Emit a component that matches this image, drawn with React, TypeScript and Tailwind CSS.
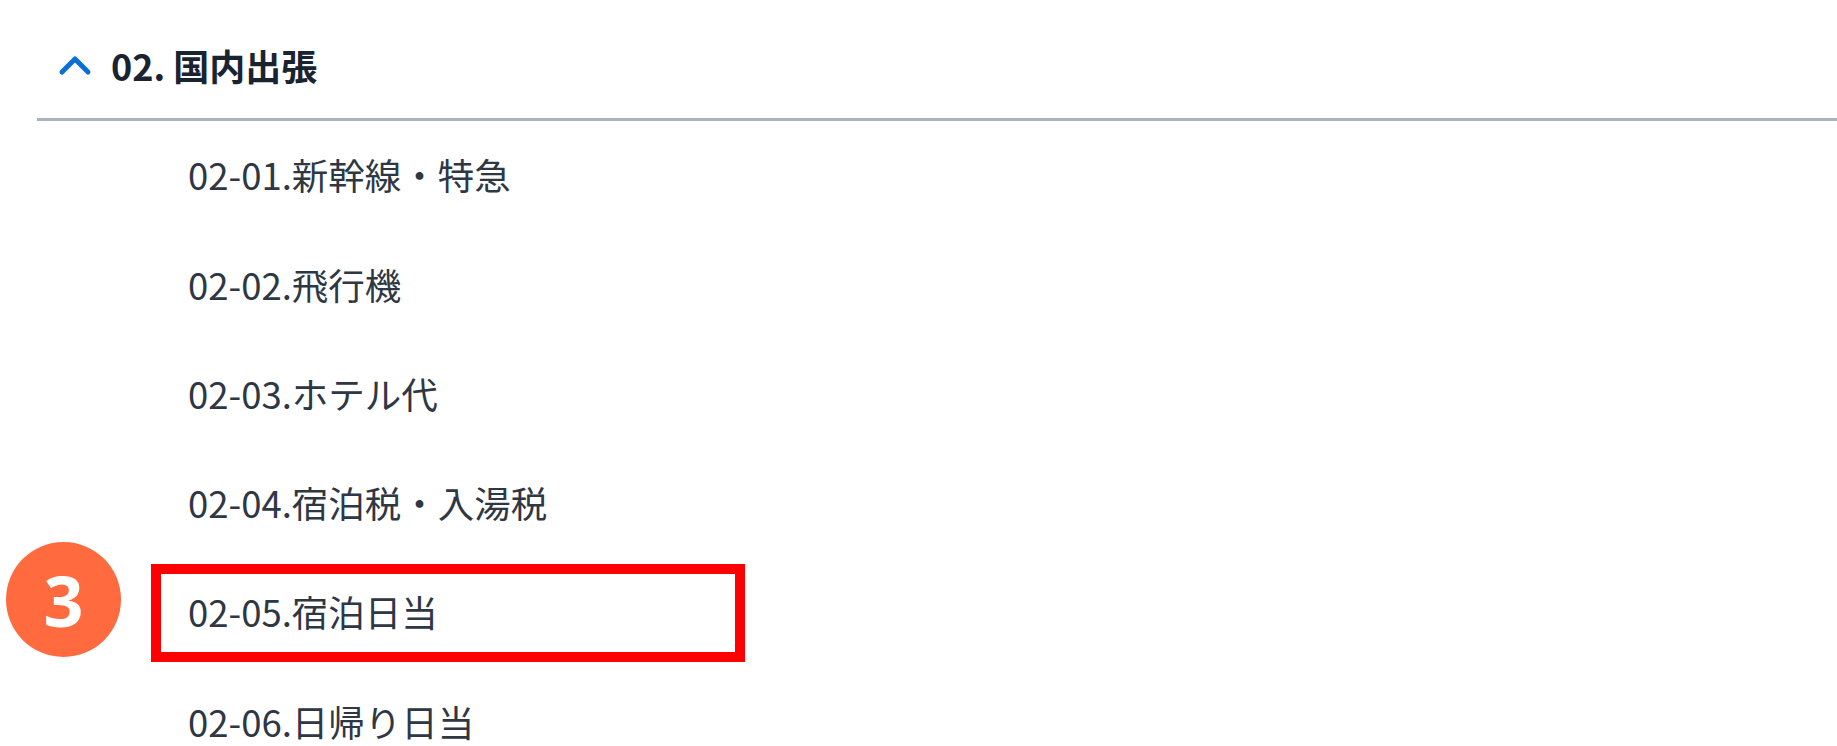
const items = [
  "02-01.新幹線・特急",
  "02-02.飛行機",
  "02-03.ホテル代",
  "02-04.宿泊税・入湯税",
  "02-05.宿泊日当",
  "02-06.日帰り日当",
];

function ChevronUp() {
  return (
    <svg width="34" height="22" viewBox="0 0 34 22" className="shrink-0">
      <polyline
        points="4,18 17,5 30,18"
        fill="none"
        stroke="#0b6fd6"
        strokeWidth="5"
        strokeLinecap="round"
        strokeLinejoin="round"
      />
    </svg>
  );
}

export default function App() {
  return (
    <div className="h-[746px] w-[1837px] overflow-hidden bg-white font-['Noto_Sans_CJK_JP','Noto_Sans',sans-serif]">
      <div className="flex h-[118px] items-center gap-[19px] pl-[58px] pt-[12px]">
        <ChevronUp />
        <span className="text-[36px] font-bold leading-none text-[#1a2330]">
          02. 国内出張
        </span>
      </div>
      <div className="ml-[37px] h-[3px] bg-[#abb3be]" />
      <ul>
        {items.map((label, i) => (
          <li
            key={label}
            className="relative flex h-[109.25px] items-center pl-[188px] text-[36.5px] leading-none text-[#2e3744]"
          >
            {label}
            {i === 4 ? (
              <>
                <div className="absolute left-[151px] top-[6px] h-[98px] w-[594px] border-[10px] border-[#ff0000]" />
                <div className="absolute left-[6px] top-[-16px] flex h-[115px] w-[115px] items-center justify-center rounded-full bg-[#ff6a3f] font-['Open_Sans',sans-serif] text-[70px] font-bold leading-none text-white">
                  3
                </div>
              </>
            ) : null}
          </li>
        ))}
      </ul>
    </div>
  );
}
